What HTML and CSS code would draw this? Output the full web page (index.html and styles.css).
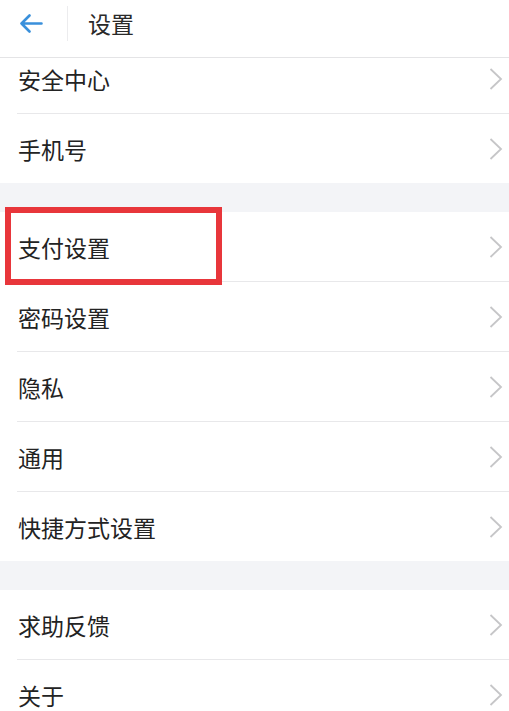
FILE: index.html
```html
<!DOCTYPE html>
<html lang="zh-CN">
  <head>
    <meta charset="UTF-8" />
    <meta name="viewport" content="width=device-width, initial-scale=1.0" />
    <title>设置</title>
    <link rel="stylesheet" href="styles.css">
  </head>
  <body>
    <header class="topbar">
      <div class="topbar_inner">
        <button class="back_btn" aria-label="返回">
          <svg width="24" height="19" viewBox="0 0 24 19">
            <path d="M22.5 9.5H2.5M10.5 1.5L2.5 9.5L10.5 17.5" fill="none" stroke="#3a90db" stroke-width="2.6" stroke-linecap="round" stroke-linejoin="round" />
          </svg>
        </button>
        <span class="divider"></span>
        <h1 class="title">设置</h1>
      </div>
    </header>

    <main class="page">
      <section class="group">
        <div class="row"><span class="label">安全中心</span><span class="chev"></span></div>
        <div class="row"><span class="label">手机号</span><span class="chev"></span></div>
      </section>

      <section class="group">
        <div class="row marked">
          <span class="label">支付设置</span><span class="chev"></span>
          <span class="highlight"></span>
        </div>
        <div class="row"><span class="label">密码设置</span><span class="chev"></span></div>
        <div class="row"><span class="label">隐私</span><span class="chev"></span></div>
        <div class="row"><span class="label">通用</span><span class="chev"></span></div>
        <div class="row"><span class="label">快捷方式设置</span><span class="chev"></span></div>
      </section>

      <section class="group">
        <div class="row"><span class="label">求助反馈</span><span class="chev"></span></div>
        <div class="row"><span class="label">关于</span><span class="chev"></span></div>
      </section>
    </main>

    <script>
      // same chevron for every row
      const chevSvg =
        '<svg width="15" height="24" viewBox="0 0 15 24"><path d="M2.5 2L13 12L2.5 22" fill="none" stroke="#c6c6c8" stroke-width="1.8" /></svg>';
      document.querySelectorAll(".chev").forEach((el) => {
        el.innerHTML = chevSvg;
      });
    </script>
  </body>
</html>
```

FILE: styles.css
```css
* {
  box-sizing: border-box;
}
html,
body {
  margin: 0;
  padding: 0;
}
body {
  width: 509px;
  height: 711px;
  overflow: hidden;
  font-family: "Noto Sans CJK SC", "Noto Sans", sans-serif;
  background-color: #f3f4f7;
  color: #222;
}
.topbar {
  position: fixed;
  top: 0;
  left: 0;
  right: 0;
  height: 58px;
  background-color: #fff;
  border-bottom: 1px solid #e4e4e6;
  z-index: 2;
}
.topbar_inner {
  height: 46px;
  display: flex;
  align-items: center;
}
.back_btn {
  -webkit-appearance: none;
  border: 0;
  outline: 0;
  background: none;
  padding: 0;
  margin-left: 19px;
  width: 25px;
  height: 20px;
  display: flex;
  align-items: center;
  cursor: pointer;
}
.divider {
  width: 1px;
  height: 35px;
  background-color: #ececee;
  margin-left: 23px;
}
.title {
  margin: 0 0 0 20px;
  font-size: 23px;
  font-weight: 400;
  color: #2a2a2a;
}
.page {
  padding-top: 44px;
}
.group {
  background-color: #fff;
  padding-left: 17px;
  margin-bottom: 29px;
}
.row {
  position: relative;
  height: 70px;
  display: flex;
  align-items: center;
  justify-content: space-between;
  padding-right: 6px;
  border-bottom: 1px solid #e8e8ea;
}
.row:last-child {
  height: 69px;
  border-bottom: 0;
}
.label {
  font-size: 23px;
  padding-left: 1px;
  color: #232323;
}
.chev {
  display: flex;
  align-items: center;
}
.highlight {
  position: absolute;
  left: -12px;
  top: -5px;
  width: 217px;
  height: 78px;
  border: 6px solid #e8363b;
}
```
